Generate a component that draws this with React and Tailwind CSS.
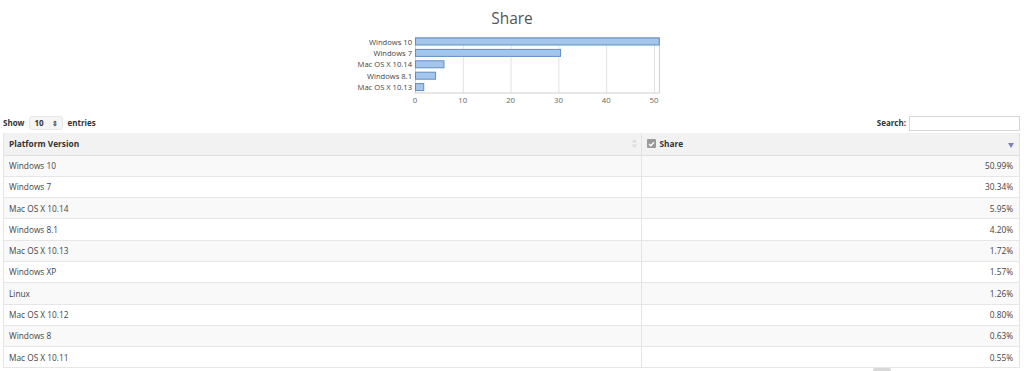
import React from "react";

const chartData = [
  { label: "Windows 10", value: 50.99 },
  { label: "Windows 7", value: 30.34 },
  { label: "Mac OS X 10.14", value: 5.95 },
  { label: "Windows 8.1", value: 4.2 },
  { label: "Mac OS X 10.13", value: 1.72 },
];

const rows = [
  ["Windows 10", "50.99%"],
  ["Windows 7", "30.34%"],
  ["Mac OS X 10.14", "5.95%"],
  ["Windows 8.1", "4.20%"],
  ["Mac OS X 10.13", "1.72%"],
  ["Windows XP", "1.57%"],
  ["Linux", "1.26%"],
  ["Mac OS X 10.12", "0.80%"],
  ["Windows 8", "0.63%"],
  ["Mac OS X 10.11", "0.55%"],
];

const PLOT_X = 415;
const PLOT_W = 244;
const UNIT = 4.78;

function ShareChart() {
  return (
    <svg width="1024" height="72" className="block">
      {[0, 10, 20, 30, 40, 50].map((t) => (
        <g key={t}>
          <line
            x1={PLOT_X + t * UNIT + 0.5}
            x2={PLOT_X + t * UNIT + 0.5}
            y1="1"
            y2="57"
            stroke="#e2e2e2"
          />
          <text
            x={PLOT_X + t * UNIT}
            y="66.5"
            textAnchor="middle"
            fontSize="7.8"
            fill="#666"
            fontFamily="'Open Sans', sans-serif"
          >
            {t}
          </text>
        </g>
      ))}
      <rect
        x={PLOT_X + 0.5}
        y="1.5"
        width={PLOT_W}
        height="55.5"
        fill="none"
        stroke="#cfcfcf"
      />
      {chartData.map((d, i) => {
        const cy = 5.5 + i * 11.4;
        return (
          <g key={d.label}>
            <rect
              x={PLOT_X + 0.5}
              y={cy - 3.5}
              width={Math.min(d.value * UNIT, PLOT_W)}
              height="7"
              fill="#a4c6ea"
              stroke="#5d8fc6"
              strokeWidth="1"
            />
            <text
              x="412"
              y={cy + 3}
              textAnchor="end"
              fontSize="7.6"
              fill="#444"
              fontFamily="'Open Sans', sans-serif"
            >
              {d.label}
            </text>
          </g>
        );
      })}
    </svg>
  );
}

function SortBoth() {
  return (
    <svg width="5" height="9" viewBox="0 0 5 9" className="opacity-60">
      <path d="M2.5 0 L5 3.5 L0 3.5 Z" fill="#ccc" />
      <path d="M2.5 9 L5 5.5 L0 5.5 Z" fill="#ccc" />
    </svg>
  );
}

export default function App() {
  return (
    <div
      className="w-[1024px] h-[371px] overflow-hidden bg-white text-[#333]"
      style={{ fontFamily: "'Open Sans', 'Noto Sans', sans-serif" }}
    >
      <div className="h-[36px] pt-[8px] text-center text-[15.5px] leading-[20px] text-[#555]">
        Share
      </div>
      <ShareChart />

      <div className="flex items-center justify-between pl-[3px] pr-[4px] mt-[7px] h-[16px] text-[8px] font-bold">
        <div className="flex items-center">
          <span>Show</span>
          <div className="ml-[5px] mr-[4px] flex items-center justify-between w-[34px] h-[14px] rounded-[3px] bg-[#f5f5f5] border border-[#e8e8e8] px-[4px] font-bold">
            <span>10</span>
            <span className="text-[7px] leading-none text-[#555]">⇕</span>
          </div>
          <span>entries</span>
        </div>
        <div className="flex items-center">
          <span className="mr-[3px]">Search:</span>
          <div className="w-[111px] h-[15px] border border-[#d6d6d6] bg-white" />
        </div>
      </div>

      <div className="mt-[2px] ml-[3px] mr-[4px] border-x border-[#e4e4e4]">
        <table className="w-full border-collapse text-[8.3px]">
          <thead>
            <tr className="h-[22px] bg-[#f2f2f3] border-b border-[#dedede]">
              <th className="w-[637px] border-r border-[#e4e4e4] pl-[5px] pr-[4px] text-left font-bold">
                <div className="flex items-center justify-between">
                  <span>Platform Version</span>
                  <SortBoth />
                </div>
              </th>
              <th className="pl-[5px] pr-[5px] text-left font-bold">
                <div className="flex items-center">
                  <span className="flex items-center justify-center w-[9px] h-[9px] rounded-[1px] bg-[#9a9a9a] mr-[4px]">
                    <svg width="7" height="6" viewBox="0 0 7 6">
                      <path
                        d="M1 3 L2.8 4.8 L6 1.2"
                        fill="none"
                        stroke="#fff"
                        strokeWidth="1.3"
                      />
                    </svg>
                  </span>
                  <span>Share</span>
                  <span className="ml-auto mt-[3px]">
                    <svg width="6" height="5" viewBox="0 0 6 5">
                      <path d="M0 0 L6 0 L3 5 Z" fill="#7d7fc4" />
                    </svg>
                  </span>
                </div>
              </th>
            </tr>
          </thead>
          <tbody>
            {rows.map(([name, share], i) => (
              <tr
                key={name}
                className={
                  "h-[21.3px] border-b border-[#e6e6e6] " +
                  (i % 2 === 0 ? "bg-[#f9f9f9]" : "bg-white")
                }
              >
                <td className="border-r border-[#e4e4e4] pl-[5px] pt-[1px] text-[#444]">
                  {name}
                </td>
                <td className="pr-[6px] pt-[1px] text-right text-[#444]">
                  {share}
                </td>
              </tr>
            ))}
          </tbody>
        </table>
      </div>
      <div className="ml-[873px] w-[18px] h-[4px] bg-[#d8d8d8] rounded-t-[2px]" />
    </div>
  );
}
